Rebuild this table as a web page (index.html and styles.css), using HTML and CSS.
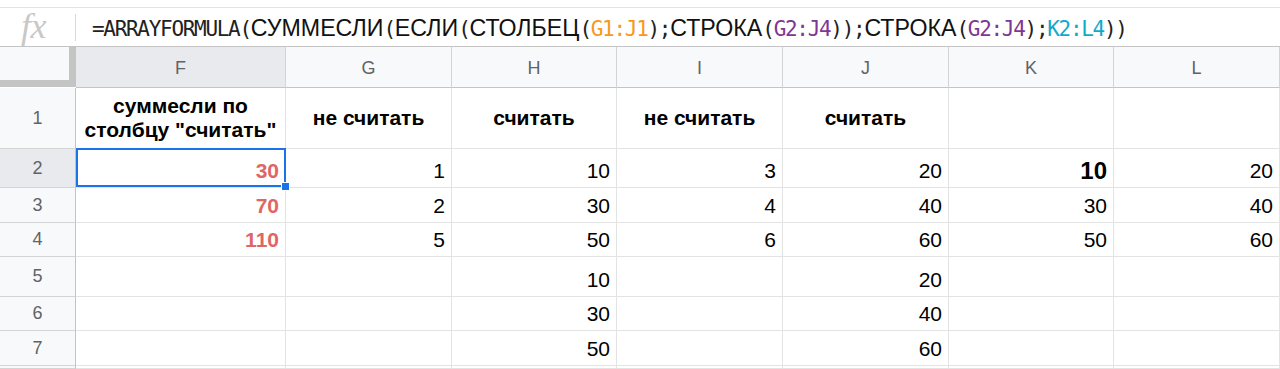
FILE: index.html
```html
<!DOCTYPE html>
<html lang="ru">
<head>
<meta charset="utf-8">
<title>Sheet</title>
<link rel="stylesheet" href="styles.css">
</head>
<body>
<div class="formula-bar">
  <div class="fx">fx</div>
  <div class="fx-sep"></div>
  <div class="formula"><span class="m">=ARRAYFORMULA(</span><span class="c">СУММЕСЛИ</span><span class="m">(</span><span class="c">ЕСЛИ</span><span class="m">(</span><span class="c">СТОЛБЕЦ</span><span class="m">(</span><span class="m r1">G1:J1</span><span class="m">);</span><span class="c">СТРОКА</span><span class="m">(</span><span class="m r2">G2:J4</span><span class="m">));</span><span class="c">СТРОКА</span><span class="m">(</span><span class="m r2">G2:J4</span><span class="m">);</span><span class="m r3">K2:L4</span><span class="m">))</span></div>
</div>
<div class="sheet">
  <div class="corner"></div>
  <div class="ch active">F</div>
  <div class="ch">G</div>
  <div class="ch">H</div>
  <div class="ch">I</div>
  <div class="ch">J</div>
  <div class="ch">K</div>
  <div class="ch">L</div>

  <div class="rh">1</div>
  <div class="cell hd">суммесли по столбцу "считать"</div>
  <div class="cell hd">не считать</div>
  <div class="cell hd">считать</div>
  <div class="cell hd">не считать</div>
  <div class="cell hd">считать</div>
  <div class="cell"></div>
  <div class="cell"></div>

  <div class="rh active">2</div>
  <div class="cell num red sel">30<span class="handle"></span></div>
  <div class="cell num">1</div>
  <div class="cell num">10</div>
  <div class="cell num">3</div>
  <div class="cell num">20</div>
  <div class="cell num big">10</div>
  <div class="cell num">20</div>

  <div class="rh">3</div>
  <div class="cell num red">70</div>
  <div class="cell num">2</div>
  <div class="cell num">30</div>
  <div class="cell num">4</div>
  <div class="cell num">40</div>
  <div class="cell num">30</div>
  <div class="cell num">40</div>

  <div class="rh">4</div>
  <div class="cell num red">110</div>
  <div class="cell num">5</div>
  <div class="cell num">50</div>
  <div class="cell num">6</div>
  <div class="cell num">60</div>
  <div class="cell num">50</div>
  <div class="cell num">60</div>

  <div class="rh">5</div>
  <div class="cell num"></div>
  <div class="cell num"></div>
  <div class="cell num">10</div>
  <div class="cell num"></div>
  <div class="cell num">20</div>
  <div class="cell num"></div>
  <div class="cell num"></div>

  <div class="rh">6</div>
  <div class="cell num"></div>
  <div class="cell num"></div>
  <div class="cell num">30</div>
  <div class="cell num"></div>
  <div class="cell num">40</div>
  <div class="cell num"></div>
  <div class="cell num"></div>

  <div class="rh">7</div>
  <div class="cell num"></div>
  <div class="cell num"></div>
  <div class="cell num">50</div>
  <div class="cell num"></div>
  <div class="cell num">60</div>
  <div class="cell num"></div>
  <div class="cell num"></div>

  <div class="rh"></div>
  <div class="cell"></div>
  <div class="cell"></div>
  <div class="cell"></div>
  <div class="cell"></div>
  <div class="cell"></div>
  <div class="cell"></div>
  <div class="cell"></div>
</div>
</body>
</html>
```

FILE: styles.css
```css
* { box-sizing: border-box; }

html, body {
  margin: 0;
  padding: 0;
  background: #ffffff;
  overflow: hidden;
}

body {
  font-family: "Liberation Sans", Arial, sans-serif;
  color: #000;
  height: 369px;
}

/* ---------- formula bar ---------- */
.formula-bar {
  margin-top: 7px;
  height: 40px;
  border-top: 1px solid #e3e3e3;
  border-bottom: 1px solid #c4c4c4;
  display: flex;
  align-items: center;
}

.fx {
  width: 75px;
  padding-left: 21px;
  font-family: "Liberation Serif", "Times New Roman", serif;
  font-style: italic;
  font-size: 36px;
  line-height: 36px;
  color: #c8c8c8;
  letter-spacing: -0.5px;
  padding-bottom: 2px;
}

.fx-sep {
  width: 1px;
  height: 27px;
  background: #dadada;
}

.formula {
  padding-left: 16px;
  white-space: nowrap;
  display: flex;
  align-items: baseline;
  padding-top: 2px;
}

.m {
  font-family: "DejaVu Sans Mono", "Liberation Mono", monospace;
  font-size: 21px;
  letter-spacing: -1.3px;
  color: #222;
}

.c {
  font-family: "Liberation Sans", Arial, sans-serif;
  font-size: 23.2px;
  color: #111;
}

.r1 { color: #f7981d; }
.r2 { color: #7e3794; }
.r3 { color: #11a9cc; }

/* ---------- sheet grid ---------- */
.sheet {
  display: grid;
  grid-template-columns: 76px 210px 166px 165px 166px 166px 165px 166px;
  grid-template-rows: 41px 61px 39px 35px 34px 40px 34px 35px 3px;
  overflow: hidden;
}

.corner {
  background: #f8f9fa;
  border-right: 7px solid #c4c4c4;
  border-bottom: 7px solid #c4c4c4;
  margin-bottom: 1px;
}

.ch {
  background: #f8f9fa;
  border-right: 1px solid #d4d4d4;
  border-bottom: 1px solid #c4c4c4;
  display: flex;
  align-items: center;
  justify-content: center;
  font-size: 18px;
  color: #5f6368;
  padding-top: 2px;
}

.rh {
  background: #f8f9fa;
  border-right: 1px solid #c4c4c4;
  border-bottom: 1px solid #d4d4d4;
  display: flex;
  align-items: center;
  justify-content: center;
  font-size: 18px;
  color: #5f6368;
}

.ch.active,
.rh.active {
  background: #e8eaed;
}

.cell {
  border-right: 1px solid #e2e3e3;
  border-bottom: 1px solid #e2e3e3;
  font-size: 21px;
  line-height: 24px;
  color: #000;
}

.hd {
  font-weight: bold;
  display: flex;
  align-items: center;
  justify-content: center;
  text-align: center;
  padding: 0 6px;
}

.num {
  display: flex;
  align-items: flex-end;
  justify-content: flex-end;
  padding: 0 6px 4px 0;
}

.red {
  color: #e06666;
  font-weight: bold;
}

.big {
  font-weight: bold;
  font-size: 24px;
}

/* selection overlay */
.sel {
  position: relative;
}

.sel::before {
  content: "";
  position: absolute;
  left: 0;
  top: -1px;
  right: -1px;
  bottom: 0;
  border: 2px solid #1a73e8;
}

.handle {
  position: absolute;
  right: -5px;
  bottom: -4px;
  width: 9px;
  height: 9px;
  background: #1a73e8;
  border: 1px solid #ffffff;
}
```
